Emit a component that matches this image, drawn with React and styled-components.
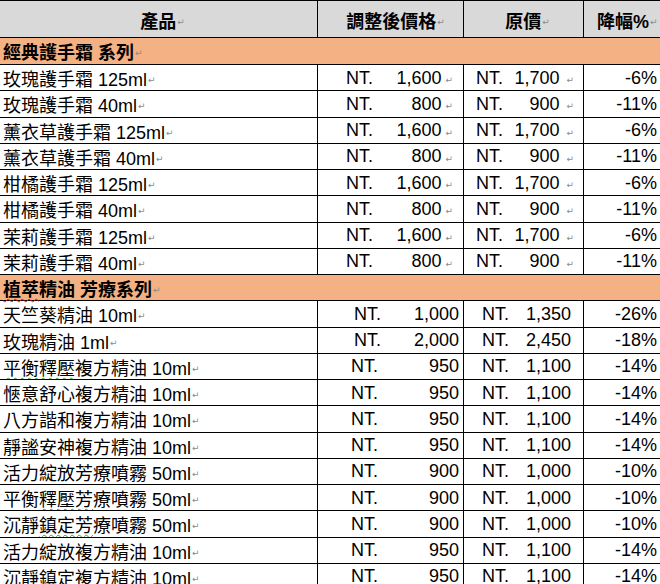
import React from 'react'
import styled, { createGlobalStyle } from 'styled-components'

const GlobalStyle = createGlobalStyle`
  html, body {
    margin: 0;
    padding: 0;
    background: #ffffff;
  }
  body {
    width: 660px;
    height: 584px;
    overflow: hidden;
    font-family: "Liberation Sans", "Noto Sans CJK TC", sans-serif;
    color: #000000;
  }
`

const Sheet = styled.div`
  width: 660px;
  overflow: hidden;
`

const Row = styled.div`
  display: grid;
  grid-template-columns: 318px 146px 120px 1fr;
  box-sizing: border-box;
  height: ${p => p.$h}px;
  border-bottom: 1px solid #000;
  ${p => p.$top && 'border-top: 1px solid #000;'}
  background: ${p => p.$bg || '#ffffff'};
`

const Cell = styled.div`
  display: flex;
  align-items: center;
  justify-content: ${p => p.$justify || 'flex-start'};
  box-sizing: border-box;
  border-right: ${p => (p.$last ? 'none' : '1px solid #000')};
  padding: 1px ${p => p.$pr || 0}px 0 ${p => p.$pl || 0}px;
  font-size: 18px;
  white-space: nowrap;
  overflow: hidden;
`

const HeadCell = styled(Cell)`
  font-weight: bold;
  font-size: 18px;
  padding-top: 2px;
`

const SectionCell = styled.div`
  grid-column: 1 / -1;
  display: flex;
  align-items: center;
  padding-left: 3px;
  font-weight: bold;
  font-size: 18px;
`

const Nt = styled.span`
  flex: none;
`

const Num = styled.span`
  margin-left: auto;
  display: flex;
  align-items: center;
`

const Mark = styled.span`
  font-family: "DejaVu Sans", sans-serif;
  font-size: 9px;
  font-weight: normal;
  color: #8a8a8a;
  margin-left: ${p => p.$gap || 1}px;
  position: relative;
  top: 2px;
`

const Squiggle = styled.span`
  text-decoration: underline wavy ${p => p.$color};
  text-decoration-thickness: 1px;
  text-decoration-skip-ink: none;
  text-underline-offset: 2px;
`

const ROW_H = 26.25

const sections = [
  {
    title: '經典護手霜 系列',
    big: false,
    rows: [
      ['玫瑰護手霜 125ml', '1,600', '1,700', '-6%'],
      ['玫瑰護手霜 40ml', '800', '900', '-11%'],
      ['薰衣草護手霜 125ml', '1,600', '1,700', '-6%'],
      ['薰衣草護手霜 40ml', '800', '900', '-11%'],
      ['柑橘護手霜 125ml', '1,600', '1,700', '-6%'],
      ['柑橘護手霜 40ml', '800', '900', '-11%'],
      ['茉莉護手霜 125ml', '1,600', '1,700', '-6%'],
      ['茉莉護手霜 40ml', '800', '900', '-11%'],
    ],
  },
  {
    title: '植萃精油 芳療系列',
    titleSquiggle: ['植萃', '#e02020'],
    big: true,
    rows: [
      ['天竺葵精油 10ml', '1,000', '1,350', '-26%'],
      ['玫瑰精油 1ml', '2,000', '2,450', '-18%'],
      ['平衡釋壓複方精油 10ml', '950', '1,100', '-14%', ['平衡釋壓', '#3aa03a']],
      ['愜意舒心複方精油 10ml', '950', '1,100', '-14%'],
      ['八方諧和複方精油 10ml', '950', '1,100', '-14%'],
      ['靜謐安神複方精油 10ml', '950', '1,100', '-14%'],
      ['活力綻放芳療噴霧 50ml', '900', '1,000', '-10%'],
      ['平衡釋壓芳療噴霧 50ml', '900', '1,000', '-10%', ['釋壓芳', '#3aa03a']],
      ['沉靜鎮定芳療噴霧 50ml', '900', '1,000', '-10%', ['鎮定芳', '#3aa03a']],
      ['活力綻放複方精油 10ml', '950', '1,100', '-14%'],
      ['沉靜鎮定複方精油 10ml', '950', '1,100', '-14%'],
    ],
  },
]

function Label({ text, squiggle }) {
  if (!squiggle) return text
  const [part, color] = squiggle
  const i = text.indexOf(part)
  return (
    <>
      {text.slice(0, i)}
      <Squiggle $color={color}>{part}</Squiggle>
      {text.slice(i + part.length)}
    </>
  )
}

function ProductRow({ row, big }) {
  const [name, price, orig, pct, squiggle] = row
  return (
    <Row $h={ROW_H}>
      <Cell $pl={3}>
        <Label text={name} squiggle={squiggle} />
        <Mark>↵</Mark>
      </Cell>
      {big ? (
        <Cell $pl={price.length > 3 ? 36 : 33} $pr={4}>
          <Nt>NT.</Nt>
          <Num>{price}</Num>
        </Cell>
      ) : (
        <Cell $pl={28} $pr={10}>
          <Nt>NT.</Nt>
          <Num>{price}<Mark $gap={4}>↵</Mark></Num>
        </Cell>
      )}
      {big ? (
        <Cell $pl={18} $pr={12}>
          <Nt>NT.</Nt>
          <Num>{orig}</Num>
        </Cell>
      ) : (
        <Cell $pl={12} $pr={9}>
          <Nt>NT.</Nt>
          <Num>{orig}<Mark $gap={7}>↵</Mark></Num>
        </Cell>
      )}
      <Cell $last $justify="flex-end" $pr={3}>
        {pct}
      </Cell>
    </Row>
  )
}

export default function App() {
  return (
    <Sheet>
      <GlobalStyle />
      <Row $h={38} $top $bg="#d9d9d9">
        <HeadCell $justify="center" $pl={8}>產品<Mark>↵</Mark></HeadCell>
        <HeadCell $justify="center" $pl={10}>調整後價格<Mark>↵</Mark></HeadCell>
        <HeadCell $justify="center" $pl={8}>原價<Mark>↵</Mark></HeadCell>
        <HeadCell $last $pl={13}>降幅%<Mark>↵</Mark></HeadCell>
      </Row>
      {sections.map((s, si) => (
        <React.Fragment key={s.title}>
          <Row $h={si === 0 ? 27 : ROW_H} $bg="#f4b183">
            <SectionCell>
              <Label text={s.title} squiggle={s.titleSquiggle} />
              <Mark>↵</Mark>
            </SectionCell>
          </Row>
          {s.rows.map(r => (
            <ProductRow key={r[0]} row={r} big={s.big} />
          ))}
        </React.Fragment>
      ))}
    </Sheet>
  )
}
